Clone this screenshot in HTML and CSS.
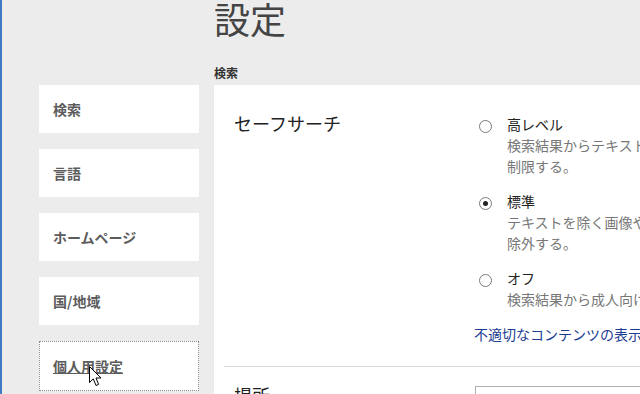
FILE: index.html
```html
<!DOCTYPE html>
<html>
  <head>
    <meta charset="UTF-8" />
    <title>設定</title>
    <link rel="stylesheet" href="styles.css">
  </head>
  <body>
    <div class="page">
      <div class="sidebar">
        <div class="nav-item">検索</div>
        <div class="nav-item">言語</div>
        <div class="nav-item">ホームページ</div>
        <div class="nav-item">国/地域</div>
        <div class="nav-item focused">
          <span class="nav-link">個人用設定</span>
          <svg class="cursor" width="13" height="21" viewBox="0 0 13 21">
            <path d="M0.5 0.5 L0.5 16.5 L4.3 12.9 L7 19.5 L9.6 18.4 L7 12 L12 12 Z" fill="#fff" stroke="#000" stroke-width="1" stroke-linejoin="miter" />
          </svg>
        </div>
      </div>
      <div class="content">
        <h1 class="title">設定</h1>
        <div class="section-label">検索</div>
        <div class="panel">
          <div class="row">
            <div class="row-title">セーフサーチ</div>
            <div class="options">
              <div class="option">
                <span class="radio"></span>
                <div class="option-text">
                  <div class="option-label">高レベル</div>
                  <div class="option-desc">検索結果からテキスト、画像、ビデオの成人向けコンテンツを<br>制限する。</div>
                </div>
              </div>
              <div class="option">
                <span class="radio checked"></span>
                <div class="option-text">
                  <div class="option-label">標準</div>
                  <div class="option-desc">テキストを除く画像やビデオの成人向けコンテンツを検索結果から<br>除外する。</div>
                </div>
              </div>
              <div class="option">
                <span class="radio"></span>
                <div class="option-text">
                  <div class="option-label">オフ</div>
                  <div class="option-desc">検索結果から成人向けコンテンツをフィルター処理しない。</div>
                </div>
              </div>
              <a class="report-link" href="#">不適切なコンテンツの表示について報告する</a>
            </div>
          </div>
          <div class="row second">
            <div class="row-title">場所</div>
            <div class="options">
              <div class="location-box"></div>
            </div>
          </div>
        </div>
      </div>
    </div>
  </body>
</html>
```

FILE: styles.css
```css
* {
  box-sizing: border-box;
}

body {
  margin: 0;
  font-family: "Noto Sans CJK JP", "Noto Sans", sans-serif;
  background-color: #ececec;
}

.page {
  display: flex;
  height: 394px;
  overflow: hidden;
  border-left: 2px solid #3d7bc4;
  background-color: #ececec;
}

.sidebar {
  display: flex;
  flex-direction: column;
  gap: 16px;
  flex: none;
  width: 160px;
  margin-left: 37px;
  padding-top: 85px;
}

.nav-item {
  position: relative;
  display: flex;
  align-items: center;
  height: 48px;
  padding-left: 14px;
  background-color: #fff;
  color: #5c5c5c;
  font-size: 14px;
  font-weight: bold;
}

.nav-item.focused {
  height: 50px;
  border: 1px dotted #8a8a8a;
  padding-left: 13px;
}

.nav-link {
  text-decoration: underline;
}

.cursor {
  position: absolute;
  left: 49px;
  top: 24px;
}

.content {
  flex: none;
  width: 700px;
  margin-left: 15px;
}

.title {
  margin: 0;
  font-size: 36px;
  line-height: 36px;
  font-weight: normal;
  color: #444;
}

.section-label {
  margin-top: 29px;
  font-size: 12px;
  line-height: 16px;
  font-weight: bold;
  color: #333;
}

.panel {
  margin-top: 4px;
  background-color: #fff;
  padding-left: 10px;
}

.row {
  display: flex;
  padding-top: 29px;
  padding-bottom: 21px;
  border-bottom: 1px solid #dcdcdc;
}

.row.second {
  padding-top: 19px;
  border-bottom: none;
}

.row-title {
  flex: none;
  width: 250px;
  margin-top: -3px;
  padding-left: 10px;
  font-size: 18px;
  line-height: 24px;
  color: #222;
}

.options {
  display: flex;
  flex-direction: column;
  gap: 14px;
}

.option {
  display: flex;
  align-items: flex-start;
  padding-left: 5px;
}

.radio {
  flex: none;
  position: relative;
  width: 13px;
  height: 13px;
  margin-top: 6px;
  margin-right: 15px;
  border: 1px solid #7a7a7a;
  border-radius: 50%;
}

.radio.checked::after {
  content: "";
  position: absolute;
  left: 3px;
  top: 3px;
  width: 5px;
  height: 5px;
  border-radius: 50%;
  background-color: #222;
}

.option-label {
  font-size: 14px;
  line-height: 21px;
  color: #222;
}

.option-desc {
  font-size: 14px;
  line-height: 21px;
  color: #777;
  white-space: nowrap;
}

.report-link {
  margin-top: -1px;
  font-size: 14px;
  line-height: 22px;
  color: #1b3c92;
  text-decoration: none;
  white-space: nowrap;
}

.location-box {
  width: 300px;
  height: 30px;
  margin-left: 1px;
  border: 1px solid #b0b0b0;
}
```
